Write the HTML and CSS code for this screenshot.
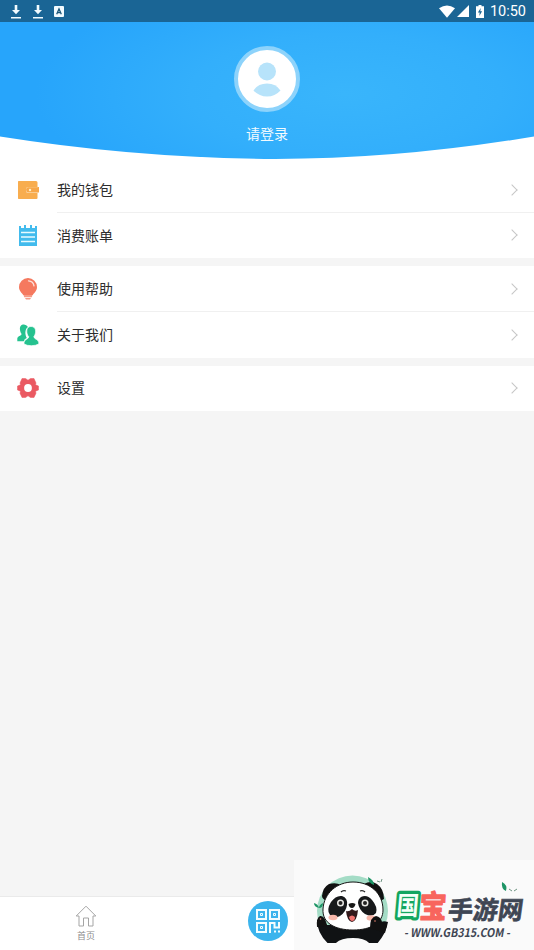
FILE: index.html
```
<!DOCTYPE html>
<html lang="zh-CN">
<head>
<meta charset="utf-8">
<title>我的</title>
<link rel="stylesheet" href="styles.css">
</head>
<body>
<div class="app">
  <header class="status">
    <div class="status-left">
      <svg width="12" height="14" viewBox="0 0 12 14" fill="#f2fbff"><path d="M4.700 0h2.600v5H10L6 9.200 2 5h2.700zM1 12h10v1.500H1z"/></svg>
      <svg width="12" height="14" viewBox="0 0 12 14" fill="#f2fbff"><path d="M4.700 0h2.600v5H10L6 9.200 2 5h2.700zM1 12h10v1.500H1z"/></svg>
      <svg class="badge-a" width="10" height="11" viewBox="0 0 10 11"><rect width="10" height="11" rx="1" fill="#f2fbff"/><path d="M2.700 8.300 5 3l2.300 5.300M3.600 6.700h2.800" fill="none" stroke="#1a5578" stroke-width="1.300"/></svg>
    </div>
    <div class="status-right">
      <svg width="16" height="13" viewBox="0 0 16 13"><path d="M0 3.200Q8-2.400 16 3.200L8 12.800z" fill="#fff"/></svg>
      <svg width="12" height="12" viewBox="0 0 12 12"><path d="M12 0v12H0z" fill="#fff"/></svg>
      <svg class="battery" width="8" height="13" viewBox="0 0 8 13"><path d="M2.500 0h3v1.300H8V13H0V1.300h2.500z" fill="#fff"/><path d="M4.700 3 1.900 7.500h1.800L3.300 11l2.800-4.700H4.300z" fill="#1a6595"/></svg>
      <span class="clock">10:50</span>
    </div>
  </header>

  <section class="hero">
    <svg class="hero-bg" width="534" height="137" viewBox="0 0 534 137">
      <defs>
        <radialGradient id="sky" gradientUnits="userSpaceOnUse" cx="0" cy="0" r="1" gradientTransform="translate(345 72) scale(310 120)">
          <stop offset="0" stop-color="#39b5fb"/><stop offset=".5" stop-color="#33affb"/><stop offset="1" stop-color="#27a5fb"/>
        </radialGradient>
      </defs>
      <path d="M0 0H534V114.500Q400 137 275 137Q135 136 0 114.500z" fill="url(#sky)"/>
    </svg>
    <div class="profile">
      <div class="avatar">
        <svg width="58" height="58" viewBox="0 0 58 58" fill="#b7e3fa"><circle cx="29" cy="21.500" r="9"/><path d="M15.500 40.500Q20 33.500 29 33.500t13.500 7Q37 46.500 29 46.500t-13.500-6z"/></svg>
      </div>
      <div class="login">请登录</div>
    </div>
  </section>

  <main class="groups">
    <ul class="group">
      <li class="row"><svg class="icon" width="22" height="22" viewBox="0 0 22 22"><path d="M1.500 2H19q1.500 0 1.500 1.500V8H11q-2 0-2 3t2 3h9.500v5q0 1-1 1h-18Q1 20 1 19V3q0-1 .5-1z" fill="#f8ad4f"/><path d="M11 8H22v5.500H11q-2 0-2-2.700T11 8z" fill="#f7a74a"/><circle cx="13" cy="11" r="1.200" fill="#fff0c8"/><path d="M10 8.200h11v.6H10zM10 13h11v.6H10z" fill="#fac57f"/></svg><span class="label">我的钱包</span><i class="chevron"></i></li>
      <li class="row"><svg class="icon" width="22" height="22" viewBox="0 0 22 22"><path d="M2 2h2v2h3V1h2v3h4V1h2v3h3V2h2v20H2z" fill="#42bbed"/><path d="M4 8.500h14M4 13h14M4 17.500h14" stroke="#e8fbff" stroke-width="1.300"/></svg><span class="label low">消费账单</span><i class="chevron"></i></li>
    </ul>
    <ul class="group">
      <li class="row"><svg class="icon" width="22" height="22" viewBox="0 0 22 22"><path d="M11 0a9 9 0 0 0-9 9c0 4 2.600 5.400 4.200 8h9.600C17.400 14.400 20 13 20 9a9 9 0 0 0-9-9z" fill="#f5795f"/><path d="M6.500 17h9l-.7 2.200h-7.600zM8 20h6l-1 1.500H9z" fill="#f69a86"/><path d="M11.500 2.800q4.800.4 5.500 5" fill="none" stroke="#fde0d8" stroke-width="1.300" stroke-linecap="round"/></svg><span class="label">使用帮助</span><i class="chevron"></i></li>
      <li class="row tall"><svg class="icon" width="22" height="22" viewBox="0 0 22 22" fill="#25c28f"><path d="M7 .5c-3 0-4.500 2-4 5.500.3 2 1 3 1.600 4-.5 2-4 2-4.300 4.500v2.700h6.500q.3-2.400 3-3.200C8 11 7.500 5.500 11 3Q9.500.5 7 .5z"/><path d="M14 2.500c3.500 0 5 2.500 4.500 6-.2 2-1 3.400-1.700 4.300.5 2.700 5 2.500 5 6V20q-3 1.700-7.500 1.700T7 20v-1.200c0-3.500 4.300-3.300 4.800-6-1-.9-1.600-2.300-1.900-4.300-.5-3.500.8-6 4.100-6z" stroke="#fff" stroke-width=".7"/></svg><span class="label">关于我们</span><i class="chevron"></i></li>
    </ul>
    <ul class="group">
      <li class="row"><svg class="icon" width="22" height="22" viewBox="0 0 22 22"><path d="M5 1.500h3.500L11 3.200l2.500-1.700H17l2 4.500-.5 1.800L21.500 9v4l-3 1.200.5 2-2 4.300h-3.500L11 18.800l-2.500 1.700H5L3 16.200l.5-2L.5 13V9l3-1.200L3 6z" fill="#ea5962" stroke="#ea5962" stroke-width=".5" stroke-linejoin="round"/><circle cx="11" cy="11" r="3.900" fill="#fff"/></svg><span class="label">设置</span><i class="chevron"></i></li>
    </ul>
  </main>

  <nav class="tabbar">
    <div class="tab">
      <svg width="22" height="22" viewBox="0 0 22 22" fill="none" stroke="#a5a5a5"><path d="M1.200 11 11 1.200 20.800 11H18v10h-4.500v-8h-5v8H4V11z"/></svg>
      <span>首页</span>
    </div>
    <div class="scan">
      <svg width="26" height="26" viewBox="0 0 26 26" fill="none" stroke="#f3fdff" stroke-width="2"><path d="M2 2h9v9H2zM15 2h9v9h-9zM2 15h9v9H2z"/><path d="M5.500 5.500h2v2h-2zM18.500 5.500h2v2h-2zM5.500 18.500h2v2h-2z" stroke-width="1"/><path d="M15 25V15h4.500v4.500H24V14M19 23.500h2M23 23.500h2"/></svg>
    </div>
  </nav>

  <aside class="watermark">
    <svg width="240" height="90" viewBox="294 860 240 90">
      <defs><clipPath id="disc"><path d="M294 860h100v83H294z"/></clipPath></defs>
      <g clip-path="url(#disc)">
        <circle cx="352.500" cy="911" r="35.500" fill="#a4dcc6"/>
        <path d="M317 920q7-2 10 5l4 0h41l5-1q5-4 11-2-2 13-14 25h-42q-15-12-15-27z" fill="#101214"/>
        <path d="M333 948q3-10 20-10 16 0 19 10z" fill="#fafafa"/>
      </g>
      <path d="M322 896q1-9 7-12 7-2 12 1l-14 16q-5-2-5-5zM364 884q7-4 13 0 7 5 7 15l-6 3z" fill="#111"/>
      <path d="M353 882c-16 0-29 11-30 27-1 14 12 21 30 21s30-7 30-20c0-17-13-28-30-28z" fill="#fff" stroke="#171717"/>
      <path d="M331 902q5-7 11-6 6 2 5 9-1 7-7 11-6 3-10-1-4-5 1-13zM361 897q6-3 11 3 6 7 4 13-4 5-11 1-6-4-7-11 0-4 3-6z" fill="#17191b"/>
      <g fill="#e8e8e5"><circle cx="340.500" cy="903" r="3.500"/><circle cx="365" cy="903" r="3.500"/></g>
      <g fill="#222"><circle cx="340.500" cy="903" r="2"/><circle cx="365" cy="903" r="2"/></g>
      <path d="M341 892q2-2 5-1M360 891q3-1 5 1" fill="none" stroke="#222" stroke-width="1.300"/>
      <path d="M348.500 904q4-2 7 0-1 4-3.500 4-3 0-3.500-4z" fill="#171717"/>
      <path d="M346 911q3 1 6-2 3 3 6 1-1 11-6 12-5-1-6-11z" fill="#32191b"/><path d="M349 917q3-3 6 0 0 4-3 4-2 0-3-4z" fill="#f17370"/>
      <ellipse cx="333" cy="917.500" rx="4.500" ry="2.800" fill="#f8b8ab"/><ellipse cx="371" cy="918" rx="4.500" ry="2.800" fill="#f8b8ab"/>
      <path d="M317 927q-1-9 3-11 5-1 7 10zM370 928q0-11 6-12 5 1 6 6l5 3-2 8z" fill="#111"/><circle cx="320.500" cy="919" r=".8" fill="#e5816e"/><circle cx="375" cy="921" r=".8" fill="#e5816e"/>
      <path d="M314 903q4 1 5 5-5-1-5-5zM319 908q0-3 4-5 0 5-4 5zM368 877q6 3 6 8-6-2-6-8zM502 882q6 3 4 9-5-2-4-9z" fill="#1d9465"/>
      <path d="M377 881l3 1M382 879l-1 3M509 889l3 2M517 889l-3 2" stroke="#6e9482" stroke-width="1"/>
      <g class="brand">
        <text class="guo" transform="translate(396 914.500) skewX(-5) scale(.92 1.080)">国</text>
        <text class="bao" transform="translate(419 917.500) skewX(-3) scale(1 1.160)">宝</text>
        <text class="rest" transform="translate(447 918.500) skewX(-8)" textLength="75">手游网</text>
      </g>
      <text class="site" transform="translate(404 936.500) skewX(-10)" textLength="106" lengthAdjust="spacingAndGlyphs">- WWW.GB315.COM -</text>
    </svg>
  </aside>
</div>
</body>
</html>
```
FILE: styles.css
```
* { box-sizing: border-box; }
body {
  margin: 0;
  font-family: "Noto Sans", "Noto Sans CJK SC", sans-serif;
  background: #f5f5f5;
}
svg { display: block; flex: none; }
.app {
  position: relative;
  display: flex;
  flex-direction: column;
  width: 534px;
  height: 950px;
  overflow: hidden;
  background: #f5f5f5;
}
.status {
  display: flex;
  justify-content: space-between;
  align-items: center;
  height: 22px;
  padding: 0 8px 0 10px;
  background: #1a6595;
}
.status-left { display: flex; align-items: center; gap: 10px; padding-top: 1px; }
.status-right { display: flex; align-items: center; gap: 2px; }
.battery { margin: 0 4px 0 5px; }
.clock {
  padding-top: 2px;
  font: 400 14.5px/20px Roboto, sans-serif;
  color: #fff;
}
.hero { display: grid; height: 145px; background: #fff; }
.hero-bg, .profile { grid-area: 1 / 1; }
.profile {
  display: flex;
  flex-direction: column;
  align-items: center;
  padding-top: 24px;
}
.avatar {
  width: 66px;
  height: 66px;
  border: 4px solid #8dd3fb;
  border-radius: 50%;
  background: #fff;
}
.login {
  margin-top: 11px;
  font: 14px/20px "Noto Sans CJK SC", sans-serif;
  color: #f3fbff;
}
.groups { display: flex; flex-direction: column; gap: 8px; }
.group { margin: 0; padding: 0; list-style: none; background: #fff; }
.row {
  position: relative;
  display: flex;
  align-items: center;
  height: 45.5px;
  padding: 0 18px 0 17px;
}
.row + .row::before {
  content: "";
  position: absolute;
  top: -1px;
  left: 57px;
  right: 0;
  height: 1px;
  background: #f0f0f0;
}
.tall { height: 46px; }
.icon { margin-right: 18px; }
.label {
  flex: 1;
  padding-bottom: 2px;
  font: 14px/20px "Noto Sans CJK SC", sans-serif;
  color: #2d2d2d;
}
.low { padding-bottom: 0; }
.chevron {
  width: 8px;
  height: 8px;
  border: solid #c6c6c6;
  border-width: 1px 1px 0 0;
  transform: rotate(45deg);
}
.tabbar {
  display: flex;
  height: 54px;
  margin-top: auto;
  border-top: 1px solid #eaeaea;
  background: #fff;
}
.tab {
  display: flex;
  flex-direction: column;
  align-items: center;
  width: 172px;
  padding-top: 8px;
  font: 9px/12px "Noto Sans CJK SC", sans-serif;
  color: #8d8d8d;
}
.tab span { margin-top: 3px; }
.scan {
  display: grid;
  place-items: center;
  width: 40px;
  height: 40px;
  margin: 4px 0 0 76px;
  border-radius: 50%;
  background: #3bb4ed;
}
.watermark {
  position: absolute;
  right: 0;
  bottom: 0;
  width: 240px;
  height: 90px;
  background: #fafafa;
}
.brand { font-family: "Noto Sans CJK SC", sans-serif; font-weight: 700; }
.guo {
  font-size: 24px;
  fill: #f4fff8;
  stroke: #12a660;
  stroke-width: 6px;
  stroke-linejoin: round;
  paint-order: stroke;
}
.bao {
  font-size: 27px;
  fill: #f8655d;
  stroke: #f8655d;
  stroke-width: 1.2px;
  stroke-linejoin: round;
}
.rest {
  font-size: 25px;
  fill: #3f4654;
  stroke: #3f4654;
  stroke-width: .6px;
}
.site {
  font: 700 12px "Noto Sans CJK SC", sans-serif;
  fill: #3f4654;
}
```
